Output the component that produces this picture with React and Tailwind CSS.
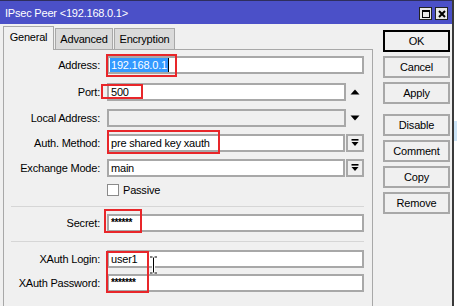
import React from "react";

const Field = ({ w = "w-[257px]", disabled, children }) => (
  <div
    className={`${w} h-[18px] border-2 border-[#a8a8a8] ${
      disabled ? "bg-[#f0f0f0]" : "bg-white"
    } flex items-center pl-[1px] overflow-hidden whitespace-nowrap`}
  >
    {children}
  </div>
);

const DropBtn = () => (
  <div className="ml-[1px] w-[18px] h-[18px] border-2 border-[#a8a8a8] bg-[#f0f0f0] flex items-center justify-center">
    <svg width="8" height="8" viewBox="0 0 8 8">
      <rect x="0.5" y="0" width="7" height="1.6" fill="#000" />
      <polygon points="0.5,3 7.5,3 4,7" fill="#000" />
    </svg>
  </div>
);

const Arrow = ({ up }) => (
  <div className="w-[18px] h-[18px] flex items-center justify-center">
    <svg width="10" height="6" viewBox="0 0 10 6">
      {up ? (
        <polygon points="0.5,5.5 9.5,5.5 5,0.5" fill="#000" />
      ) : (
        <polygon points="0.5,0.5 9.5,0.5 5,5.5" fill="#000" />
      )}
    </svg>
  </div>
);

const Row = ({ label, mt, children }) => (
  <div className={`flex items-center ${mt}`}>
    <div className="w-[96px] text-right">{label}</div>
    <div className="ml-[7px] flex items-center">{children}</div>
  </div>
);

const Btn = ({ children, mt = "mt-[4px]", def }) => (
  <div
    className={`${mt} w-[67px] h-[22px] flex items-center justify-center border-2 ${
      def ? "border-black" : "border-[#a8a8a8]"
    } bg-[#f0f0f0]`}
  >
    {children}
  </div>
);

export default function App() {
  return (
    <div
      className="w-[457px] h-[306px] overflow-hidden relative flex bg-white text-[11px] tracking-[-0.2px] text-black leading-none"
      style={{ fontFamily: '"Liberation Sans", Arial, sans-serif' }}
    >
      {/* Window */}
      <div className="w-[454px] shrink-0 flex flex-col bg-[#f0f0f0] border-r-2 border-[#3a3a3a]">
        {/* Title bar */}
        <div className="h-[24px] shrink-0 bg-[#4b50c8] border-t border-[#2e2e5e] flex items-center pl-[5px] pr-[4px] text-white text-[11px]">
          <span className="mt-[2px]">IPsec Peer &lt;192.168.0.1&gt;</span>
          <div className="ml-auto flex gap-[3px] mt-[2px]">
            <div className="w-[13px] h-[13px] border border-[#222] bg-[#e8e8e8] flex items-center justify-center">
              <div className="w-[8px] h-[8px] border border-black border-t-2" />
            </div>
            <div className="w-[13px] h-[13px] border border-[#222] bg-[#e8e8e8] flex items-center justify-center">
              <svg width="8" height="8" viewBox="0 0 8 8">
                <path d="M1 1 L7 7 M7 1 L1 7" stroke="#000" strokeWidth="2" />
              </svg>
            </div>
          </div>
        </div>

        <div className="flex flex-1">
          {/* Tabs + panel */}
          <div className="w-[373px] shrink-0 flex flex-col pl-[3px]">
            <div className="h-[25px] flex items-end">
              <div className="relative z-10 w-[51px] h-[24px] -mb-[1px] bg-[#f0f0f0] border border-b-0 border-[#a8a8a8] flex items-center justify-center pb-[3px]">
                General
              </div>
              <div className="ml-[1px] w-[58px] h-[21px] bg-[#dadada] border border-b-0 border-[#a8a8a8] flex items-center justify-center">
                Advanced
              </div>
              <div className="ml-[1px] w-[61px] h-[21px] bg-[#dadada] border border-b-0 border-[#a8a8a8] flex items-center justify-center">
                Encryption
              </div>
            </div>
            <div className="flex-1 border-l border-t border-r border-[#a8a8a8] flex flex-col">
              <Row label="Address:" mt="mt-[6px]">
                <Field>
                  <span className="bg-[#3399ff] text-white h-[15px] flex items-center px-[1px]">
                    192.168.0.1
                  </span>
                  <span className="w-px h-[15px] bg-black" />
                </Field>
              </Row>
              <Row label="Port:" mt="mt-[9px]">
                <Field w="w-[239px]">
                  <span className="pl-[1px]">500</span>
                </Field>
                <Arrow up />
              </Row>
              <Row label="Local Address:" mt="mt-[8px]">
                <Field w="w-[239px]" disabled />
                <Arrow />
              </Row>
              <Row label="Auth. Method:" mt="mt-[7px]">
                <Field w="w-[238px]">
                  <span className="pl-[1px]">pre shared key xauth</span>
                </Field>
                <DropBtn />
              </Row>
              <Row label="Exchange Mode:" mt="mt-[7px]">
                <Field w="w-[238px]">
                  <span className="pl-[1px]">main</span>
                </Field>
                <DropBtn />
              </Row>
              <div className="flex items-center mt-[7px] ml-[103px]">
                <div className="w-[12px] h-[12px] border border-[#8a8a8a] bg-white" />
                <span className="ml-[4px]">Passive</span>
              </div>
              <div className="mt-[10px] ml-[7px] w-[353px] h-px bg-[#d6d6d6]" />
              <Row label="Secret:" mt="mt-[7px]">
                <Field>
                  <span className="pl-[1px] text-[10px] tracking-[-0.4px] font-bold">
                    ******
                  </span>
                </Field>
              </Row>
              <div className="mt-[9px] ml-[7px] w-[353px] h-px bg-[#d6d6d6]" />
              <Row label="XAuth Login:" mt="mt-[8px]">
                <Field>
                  <span className="pl-[1px]">user1</span>
                </Field>
              </Row>
              <Row label="XAuth Password:" mt="mt-[6px]">
                <Field>
                  <span className="pl-[1px] text-[10px] tracking-[-0.4px] font-bold">
                    *******
                  </span>
                </Field>
              </Row>
            </div>
          </div>

          {/* Buttons */}
          <div className="flex flex-col pl-[10px] pt-[6px]">
            <Btn mt="mt-0" def>OK</Btn>
            <Btn>Cancel</Btn>
            <Btn>Apply</Btn>
            <Btn mt="mt-[10px]">Disable</Btn>
            <Btn>Comment</Btn>
            <Btn>Copy</Btn>
            <Btn>Remove</Btn>
          </div>
        </div>
      </div>

      {/* Outside strip */}
      <div className="flex-1 flex flex-col bg-white">
        <div className="h-[121px]" />
        <div className="h-[20px] bg-[#cce4f7]" />
      </div>

      {/* Red annotation boxes */}
      <div className="absolute left-[106px] top-[54px] w-[71px] h-[23px] border-2 border-[#e8262a]" />
      <div className="absolute left-[101px] top-[84px] w-[42px] h-[15px] border-2 border-[#e8262a]" />
      <div className="absolute left-[107px] top-[130px] w-[113px] h-[24px] border-2 border-[#e8262a]" />
      <div className="absolute left-[104px] top-[209px] w-[38px] h-[24px] border-2 border-[#e8262a]" />
      <div className="absolute left-[106px] top-[251px] w-[43px] h-[42px] border-2 border-[#e8262a]" />

      {/* I-beam cursor */}
      <svg className="absolute left-[149px] top-[256px]" width="9" height="18" viewBox="0 0 9 18">
        <path d="M1 1 H3.5 M5.5 1 H8 M4.5 1.5 V16.5 M1 17 H3.5 M5.5 17 H8" stroke="#fff" strokeWidth="3" />
        <path d="M1 1 H3.5 M5.5 1 H8 M4.5 1.5 V16.5 M1 17 H3.5 M5.5 17 H8" stroke="#000" strokeWidth="1" />
      </svg>
    </div>
  );
}
